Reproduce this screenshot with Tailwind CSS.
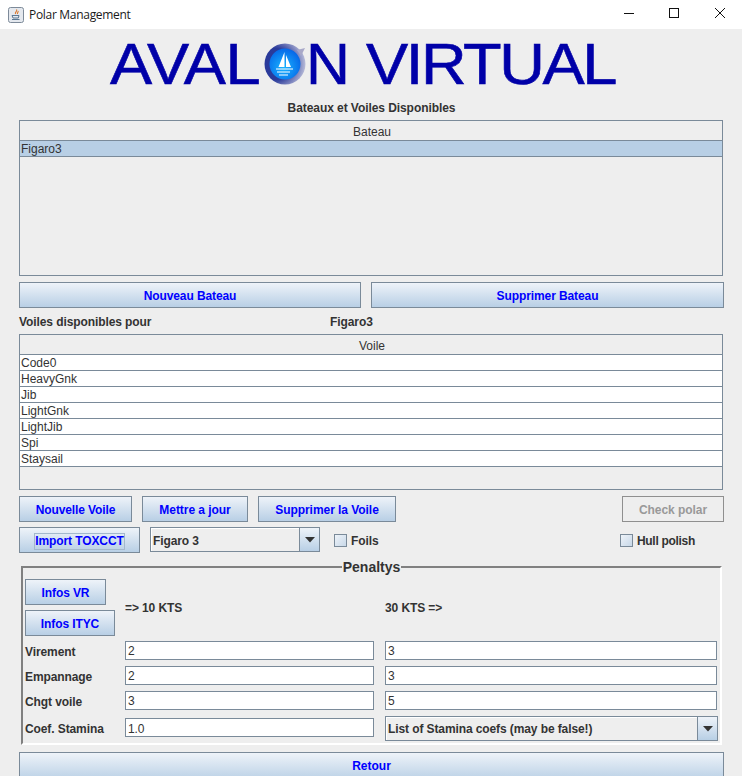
<!DOCTYPE html>
<html><head><meta charset="utf-8"><script src="https://cdn.jsdelivr.net/npm/@tailwindcss/browser@4"></script></head>
<body class="m-0 overflow-hidden">
<div class="w-[742px] h-[776px] overflow-hidden bg-[#eeeeee] font-['Liberation_Sans',sans-serif] text-[12px] text-[#333333]">
  <!-- title bar -->
  <div class="h-[29px] bg-white flex items-center pl-[8px] text-[#1a1a1a]">
    <svg width="16" height="16" viewBox="0 0 16 16" class="mr-[5px]"><rect x="0.5" y="0.5" width="15" height="15" rx="2" fill="#e4e8ee" stroke="#7d8a99"/><path d="M8.500 2.500c1.500 1.500-2 2.500-1 4.500M10 4c.8 1-1 1.500-.5 3" fill="none" stroke="#d9762a" stroke-width="1.100"/><path d="M4 8.500h7l-.7 2.500H5zM4 12.500h7.500" fill="none" stroke="#5a7894" stroke-width="1"/></svg>
    <span class="font-['Open_Sans',sans-serif] text-[12px] tracking-[-0.3px] leading-none">Polar Management</span>
    <div class="ml-auto flex items-center h-full">
      <svg width="46" height="29" viewBox="0 0 46 29"><path d="M20 13.500h10" stroke="#111" fill="none"/></svg>
      <svg width="46" height="29" viewBox="0 0 46 29"><rect x="19.500" y="8.500" width="9" height="9" stroke="#111" fill="none"/></svg>
      <svg width="46" height="29" viewBox="0 0 46 29"><path d="M19 8l10 10M29 8L19 18" stroke="#111" fill="none"/></svg>
    </div>
  </div>

  <!-- logo -->
  <div class="h-[61px] pl-[110px] pt-[5px] flex items-start text-[#0000a8] text-[58px] leading-[60px] tracking-[-0.5px] whitespace-nowrap [-webkit-text-stroke:0.6px_#0000a8]">
    <span class="inline-block w-[154px] origin-left scale-x-[1.09]">AVAL</span>
    <svg width="42" height="42" viewBox="0 0 42 42" class="mt-[9px] shrink-0">
      <defs>
        <radialGradient id="ring" cx="25%" cy="50%" r="85%"><stop offset="45%" stop-color="#2a3a9a"/><stop offset="100%" stop-color="#e0e0ea"/></radialGradient>
        <radialGradient id="core" cx="45%" cy="60%" r="60%"><stop offset="0%" stop-color="#19b4ff"/><stop offset="100%" stop-color="#0668e8"/></radialGradient>
      </defs>
      <circle cx="21" cy="21" r="20.500" fill="url(#ring)"/>
      <path d="M33 7l8-2-4 8z" fill="#a8a8c8"/>
      <circle cx="21" cy="21" r="15.500" fill="url(#core)"/>
      <path d="M20.500 9l-6 15h6zM22 12l5 12h-5z" fill="#fff"/>
      <path d="M12 26h17M13 29h13M15 32h9" stroke="#fff" stroke-width="1.200" fill="none"/>
    </svg>
    <span class="inline-block w-[60px] origin-left scale-x-[1.05]">N</span>
    <span class="inline-block origin-left scale-x-[1.09] tracking-[-2.2px]">VIRTUAL</span>
  </div>

  <div class="h-[30px] flex items-start justify-center font-bold tracking-[-0.07px] leading-[14px] pt-[11px] pl-[1px]"><span>Bateaux et Voiles Disponibles</span></div>

  <!-- table 1 -->
  <div class="ml-[19px] w-[704px] h-[156px] border border-[#7a8a99] bg-[#eeeeee]">
    <div class="h-[20px] border-b border-[#7a8a99] flex items-center justify-center leading-none pt-[2px] pl-[2px]">Bateau</div>
    <div class="h-[16px] border-b border-[#7a8a99] bg-[#b8cfe5] pl-[1px] leading-[17px]">Figaro3</div>
  </div>

  <!-- boat buttons -->
  <div class="ml-[19px] mt-[6px] flex gap-[10px]">
    <button class="w-[342px] h-[26px] pt-[2px] border border-[#7a8a99] bg-gradient-to-b from-[#eef3f9] to-[#b8cfe5] text-[#0000ff] font-bold text-[12px] tracking-[-0.1px]">Nouveau Bateau</button>
    <button class="w-[353px] h-[26px] pt-[2px] border border-[#7a8a99] bg-gradient-to-b from-[#eef3f9] to-[#b8cfe5] text-[#0000ff] font-bold text-[12px] tracking-[-0.1px]">Supprimer Bateau</button>
  </div>

  <div class="ml-[19px] h-[26px] flex items-center font-bold tracking-[-0.09px] pt-[2px]"><span class="w-[311px]">Voiles disponibles pour</span><span>Figaro3</span></div>

  <!-- table 2 -->
  <div class="ml-[19px] w-[704px] h-[156px] border border-[#7a8a99]">
    <div class="h-[20px] border-b border-[#7a8a99] flex items-center justify-center leading-none pt-[2px] pl-[2px]">Voile</div>
    <div class="bg-white">
      <div class="h-[16px] border-b border-[#7a8a99] pl-[1px] leading-[17px]">Code0</div>
      <div class="h-[16px] border-b border-[#7a8a99] pl-[1px] leading-[17px]">HeavyGnk</div>
      <div class="h-[16px] border-b border-[#7a8a99] pl-[1px] leading-[17px]">Jib</div>
      <div class="h-[16px] border-b border-[#7a8a99] pl-[1px] leading-[17px]">LightGnk</div>
      <div class="h-[16px] border-b border-[#7a8a99] pl-[1px] leading-[17px]">LightJib</div>
      <div class="h-[16px] border-b border-[#7a8a99] pl-[1px] leading-[17px]">Spi</div>
      <div class="h-[16px] border-b border-[#7a8a99] pl-[1px] leading-[17px]">Staysail</div>
    </div>
  </div>

  <!-- sail buttons -->
  <div class="ml-[19px] mt-[6px] w-[705px] flex">
    <button class="w-[113px] h-[26px] pt-[2px] border border-[#7a8a99] bg-gradient-to-b from-[#eef3f9] to-[#b8cfe5] text-[#0000ff] font-bold text-[12px] tracking-[-0.1px]">Nouvelle Voile</button>
    <button class="ml-[10px] w-[106px] h-[26px] pt-[2px] border border-[#7a8a99] bg-gradient-to-b from-[#eef3f9] to-[#b8cfe5] text-[#0000ff] font-bold text-[12px] tracking-[-0.05px]">Mettre a jour</button>
    <button class="ml-[10px] w-[138px] h-[26px] pt-[2px] border border-[#7a8a99] bg-gradient-to-b from-[#eef3f9] to-[#b8cfe5] text-[#0000ff] font-bold text-[12px] tracking-[-0.05px]">Supprimer la Voile</button>
    <button class="ml-auto w-[102px] h-[26px] pt-[2px] border border-[#8f8f8f] bg-[#eeeeee] text-[#999999] font-bold text-[12px] tracking-[-0.05px]">Check polar</button>
  </div>

  <!-- import row -->
  <div class="ml-[19px] mt-[5px] w-[705px] h-[26px] flex items-start font-bold tracking-[-0.1px]">
    <button class="w-[121px] h-[26px] pt-[3px] border border-[#7a8a99] bg-gradient-to-b from-[#eef3f9] to-[#b8cfe5] text-[#0000ff] font-bold text-[12px] flex items-center justify-center"><span class="border border-[#a3b8cc] leading-[15px]">Import TOXCCT</span></button>
    <div class="ml-[10px] w-[170px] h-[25px] border border-[#7a8a99] flex">
      <div class="flex-1 pl-[2px] leading-[27px] border-r border-[#7a8a99] shadow-[inset_1px_1px_0_#fff]">Figaro 3</div>
      <div class="w-[19px] bg-gradient-to-b from-[#eef3f9] to-[#b8cfe5] flex items-center justify-center"><svg width="10" height="6" viewBox="0 0 10 6"><path d="M0 0h10L5 5.500z" fill="#333"/></svg></div>
    </div>
    <div class="ml-[14px] mt-[7px] w-[13px] h-[13px] border border-[#7a8a99] bg-gradient-to-br from-[#eef3f9] to-[#c8d8e8]"></div>
    <span class="ml-[4px] mt-[7px] leading-[14px]">Foils</span>
    <div class="ml-auto mt-[7px] w-[13px] h-[13px] border border-[#7a8a99] bg-gradient-to-br from-[#eef3f9] to-[#c8d8e8]"></div>
    <span class="ml-[4px] mt-[7px] mr-[29px] leading-[14px] tracking-[-0.3px]">Hull polish</span>
  </div>

  <!-- penaltys -->
  <fieldset class="ml-[21px] mt-[6px] w-[701px] h-[186px] border-2 border-t-[#808080] border-l-[#808080] border-r-white border-b-white px-[2px]">
    <legend class="mx-auto px-[1px] text-[14px] font-bold leading-[16px] text-[#333]">Penaltys</legend>
    <div class="flex h-[58px] mt-[4px]">
      <div class="w-[100px] flex flex-col gap-[5px] shrink-0">
        <button class="w-[81px] h-[26px] pt-[2px] border border-[#7a8a99] bg-gradient-to-b from-[#eef3f9] to-[#b8cfe5] text-[#0000ff] font-bold text-[12px] tracking-[-0.1px]">Infos VR</button>
        <button class="w-[90px] h-[26px] pt-[2px] border border-[#7a8a99] bg-gradient-to-b from-[#eef3f9] to-[#b8cfe5] text-[#0000ff] font-bold text-[12px] tracking-[-0.1px]">Infos ITYC</button>
      </div>
      <div class="w-[260px] pt-[22px] font-bold tracking-[-0.1px] leading-[14px]">=&gt; 10 KTS</div>
      <div class="pt-[22px] font-bold tracking-[-0.1px] leading-[14px]">30 KTS =&gt;</div>
    </div>
    <div class="mt-[3px] flex items-center h-[20px] font-bold tracking-[-0.1px]"><span class="w-[100px] pt-[4px]">Virement</span><div class="w-[249px] h-[19px] border border-[#7a8a99] bg-white font-normal pl-[2px] leading-[19px]">2</div><div class="ml-[11px] w-[332px] h-[19px] border border-[#7a8a99] bg-white font-normal pl-[2px] leading-[19px]">3</div></div>
    <div class="mt-[5px] flex items-center h-[20px] font-bold tracking-[-0.1px]"><span class="w-[100px] pt-[4px]">Empannage</span><div class="w-[249px] h-[19px] border border-[#7a8a99] bg-white font-normal pl-[2px] leading-[19px]">2</div><div class="ml-[11px] w-[332px] h-[19px] border border-[#7a8a99] bg-white font-normal pl-[2px] leading-[19px]">3</div></div>
    <div class="mt-[5px] flex items-center h-[20px] font-bold tracking-[-0.1px]"><span class="w-[100px] pt-[4px]">Chgt voile</span><div class="w-[249px] h-[19px] border border-[#7a8a99] bg-white font-normal pl-[2px] leading-[19px]">3</div><div class="ml-[11px] w-[332px] h-[19px] border border-[#7a8a99] bg-white font-normal pl-[2px] leading-[19px]">5</div></div>
    <div class="mt-[6px] flex items-start h-[25px] font-bold tracking-[-0.1px]"><span class="w-[100px] pt-[6px] leading-[14px]">Coef. Stamina</span><div class="mt-[2px] w-[249px] h-[19px] border border-[#7a8a99] bg-white font-normal pl-[2px] leading-[20px]">1.0</div>
      <div class="ml-[11px] w-[333px] h-[25px] border border-[#7a8a99] flex">
        <div class="flex-1 pl-[2px] leading-[25px] border-r border-[#7a8a99] shadow-[inset_1px_1px_0_#fff]">List of Stamina coefs (may be false!)</div>
        <div class="w-[19px] bg-gradient-to-b from-[#eef3f9] to-[#b8cfe5] flex items-center justify-center"><svg width="10" height="6" viewBox="0 0 10 6"><path d="M0 0h10L5 5.500z" fill="#333"/></svg></div>
      </div>
    </div>
  </fieldset>

  <button class="block ml-[19px] mt-[7px] w-[705px] h-[30px] border border-[#7a8a99] bg-gradient-to-b from-[#eef3f9] to-[#b8cfe5] text-[#0000ff] font-bold text-[12px] pb-[2px]">Retour</button>
</div>
</body></html>
